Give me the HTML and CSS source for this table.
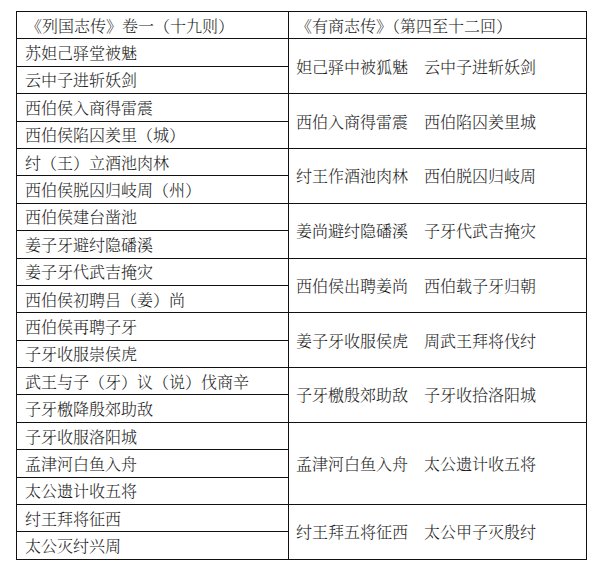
FILE: index.html
```html
<!DOCTYPE html>
<html lang="zh-CN">
<head>
<meta charset="utf-8">
<title>列国志传 有商志传 对照</title>
<link rel="stylesheet" href="styles.css">
</head>
<body>
<table class="cmp">
  <tr class="head">
    <td class="left">《列国志传》卷一（十九则）</td>
    <td class="right">《有商志传》（第四至十二回）</td>
  </tr>
  <tr><td class="left">苏妲己驿堂被魅</td><td class="right" rowspan="2">妲己驿中被狐魅　云中子进斩妖剑</td></tr>
  <tr><td class="left">云中子进斩妖剑</td></tr>
  <tr><td class="left">西伯侯入商得雷震</td><td class="right" rowspan="2">西伯入商得雷震　西伯陷囚羑里城</td></tr>
  <tr><td class="left">西伯侯陷囚羑里（城）</td></tr>
  <tr><td class="left">纣（王）立酒池肉林</td><td class="right" rowspan="2">纣王作酒池肉林　西伯脱囚归岐周</td></tr>
  <tr><td class="left">西伯侯脱囚归岐周（州）</td></tr>
  <tr><td class="left">西伯侯建台凿池</td><td class="right" rowspan="2">姜尚避纣隐磻溪　子牙代武吉掩灾</td></tr>
  <tr><td class="left">姜子牙避纣隐磻溪</td></tr>
  <tr><td class="left">姜子牙代武吉掩灾</td><td class="right" rowspan="2">西伯侯出聘姜尚　西伯载子牙归朝</td></tr>
  <tr><td class="left">西伯侯初聘吕（姜）尚</td></tr>
  <tr><td class="left">西伯侯再聘子牙</td><td class="right" rowspan="2">姜子牙收服侯虎　周武王拜将伐纣</td></tr>
  <tr><td class="left">子牙收服崇侯虎</td></tr>
  <tr><td class="left">武王与子（牙）议（说）伐商辛</td><td class="right" rowspan="2">子牙檄殷郊助敌　子牙收拾洛阳城</td></tr>
  <tr><td class="left">子牙檄降殷郊助敌</td></tr>
  <tr><td class="left">子牙收服洛阳城</td><td class="right" rowspan="3">孟津河白鱼入舟　太公遗计收五将</td></tr>
  <tr><td class="left">孟津河白鱼入舟</td></tr>
  <tr><td class="left">太公遗计收五将</td></tr>
  <tr><td class="left">纣王拜将征西</td><td class="right" rowspan="2">纣王拜五将征西　太公甲子灭殷纣</td></tr>
  <tr><td class="left">太公灭纣兴周</td></tr>
</table>
</body>
</html>
```

FILE: styles.css
```css
html, body {
  margin: 0;
  padding: 0;
  background: #ffffff;
}

body {
  font-family: "Liberation Serif", "Noto Serif CJK SC", "Noto Sans CJK SC", serif;
  font-weight: 300;
  color: #1c1c1c;
}

.cmp {
  border-collapse: collapse;
  margin: 11px 0 0 16px;
  width: 571px;
  table-layout: fixed;
}

.cmp tr {
  height: 27.4px;
}

.cmp td {
  border: 1px solid #111111;
  padding: 0 0 0 8px;
  vertical-align: middle;
  white-space: nowrap;
  line-height: 1;
  overflow: hidden;
}

.cmp td.left {
  width: 262px;
  font-size: 16px;
  padding-top: 3px;
}

.cmp td.right {
  font-size: 16px;
  padding-top: 3px;
  padding-left: 7px;
}

.cmp .head td {
  font-size: 16px;
}

.cmp .head td.left {
  padding-left: 9px;
}
```
